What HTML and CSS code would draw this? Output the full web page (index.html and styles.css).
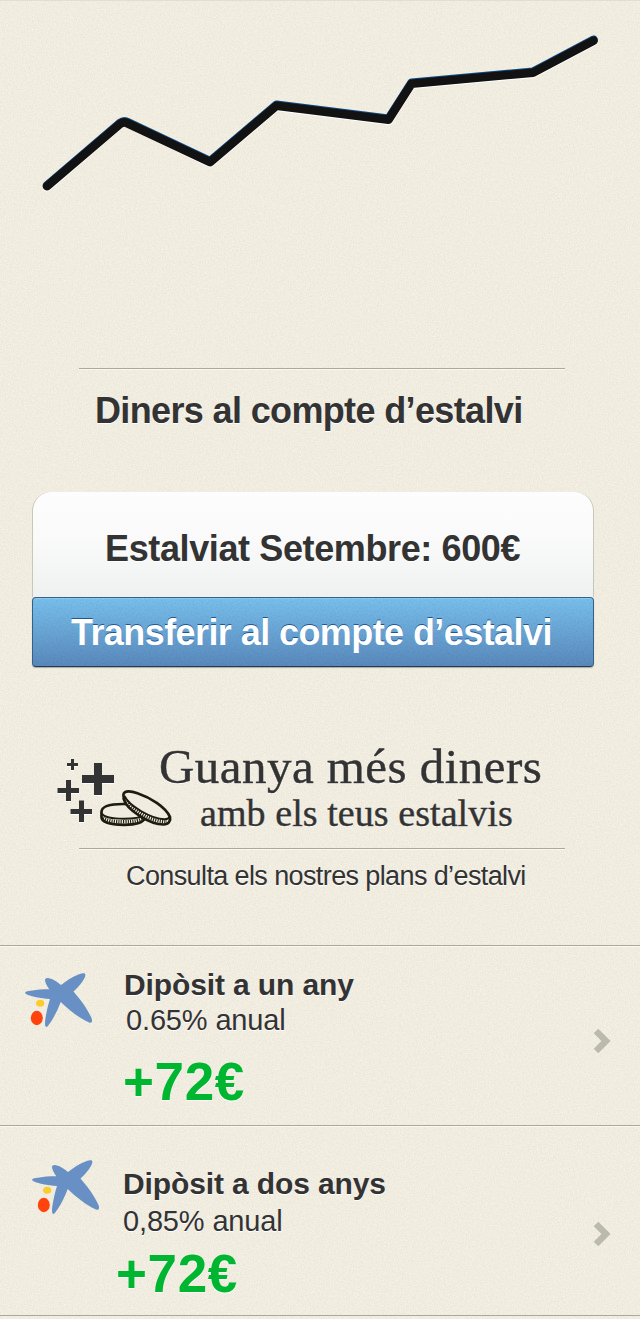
FILE: index.html
```html
<!DOCTYPE html>
<html lang="ca">
<head>
<meta charset="utf-8">
<title>Estalvis</title>
<link rel="stylesheet" href="styles.css">
</head>
<body>
<svg class="paper" width="640" height="1319" aria-hidden="true">
  <filter id="grain" x="0" y="0" width="100%" height="100%" color-interpolation-filters="sRGB">
    <feTurbulence type="fractalNoise" baseFrequency="0.75" numOctaves="3" seed="4"/>
    <feColorMatrix values="0.09 0 0 0 0.897  0.09 0 0 0 0.881  0.1 0 0 0 0.829  0 0 0 0 1"/>
  </filter>
  <rect width="640" height="1319" filter="url(#grain)"/>
</svg>
<main class="page">
  <section class="chart">
    <svg width="640" height="368" viewBox="0 0 640 368">
      <g fill="none" stroke-width="8.600" stroke-linecap="round" stroke-linejoin="round">
        <path stroke="#fff" d="M47 187.200 120 124.500Q124 121 128 123.500L210 163.200 276.500 106.700 388.500 120.700 411.500 84.700 533 73.700 593.500 41.700"/>
        <path stroke="#0d4a86" d="M47 185.400 120 123Q124 120 128 122.500L210 161.200 276.500 104.700 388.500 118.700 411.500 82.700 533 71.700 593.500 39.700"/>
        <path stroke="#121212" d="M47 186.200 120 124Q124 121 128 123.500L210 162.200 276.500 105.700 388.500 119.700 411.500 83.700 533 72.700 593.500 40.700"/>
      </g>
    </svg>
  </section>
  <hr class="rule">
  <h1 class="title">Diners al compte d’estalvi</h1>
  <section class="card">
    <div class="saved">Estalviat Setembre: 600€</div>
    <button class="transfer">
      <svg class="button-grain" width="560" height="68" aria-hidden="true">
        <filter id="dust" x="0" y="0" width="100%" height="100%" color-interpolation-filters="sRGB">
          <feTurbulence type="fractalNoise" baseFrequency="0.6" numOctaves="2"/>
          <feColorMatrix values="0 0 0 0 0.1  0 0 0 0 0.2  0 0 0 0 0.3  0.2 0 0 0 -0.08"/>
        </filter>
        <rect width="560" height="68" filter="url(#dust)"/>
      </svg>
      <span class="transfer-label">Transferir al compte d’estalvi</span>
    </button>
  </section>
  <section class="promo">
    <svg class="coins" width="120" height="76" viewBox="55 756 120 76">
      <g fill="#fff" transform="translate(0 1)"><path id="pluses" d="M71 759h3v4h4v3h-4v4h-3v-4h-4v-3h4zM94 763h8v12h12v8h-12v12h-8v-12H82v-8h12zM66 780h5v8h8v5h-8v8h-5v-8h-8.500v-5h8.500zM79 800.500h5v8.500h8v5h-8v8h-5v-8h-8.500v-5h8.500z"/></g>
      <use href="#pluses" fill="#333"/>
      <g fill="#f0ece0" stroke="#1d1c10" stroke-width="2.700" stroke-linejoin="round">
        <path d="M101.500 812C101.500 806.500 110 804 123 804S145 807 145 813V818C143 823 134 824.800 124 824.800 110 824.800 101.500 822 101.500 817Z"/>
        <path fill="none" stroke-width="1.900" d="M101.800 813.500C104 817.500 113 818.700 124 818.700 133 818.700 140 818 144 815"/>
        <path fill="none" stroke-width="3.600" stroke-dasharray="1.100 1.200" d="M103 818C107 821 114 821.800 124 821.800 134 821.800 140 820.500 144 817.500"/>
        <path d="M123.700 797C122 791 128 789.800 137.500 793.300 150 797.500 165.500 807 170 817 171 821 168.500 824.500 163.500 824.500 150 824.500 126.500 810 123.700 799Z"/>
        <path fill="none" stroke-width="1.900" d="M124.500 796C129 806 151.500 818.800 164.500 819.300 168 819.300 169.500 818 169.800 816"/>
        <path fill="none" stroke-width="3.600" stroke-dasharray="1.100 1.200" d="M125.500 799.500C131 810.500 152 821.500 167 821.800"/>
      </g>
    </svg>
    <div class="promo-text">
      <h2 class="promo-title">Guanya més diners</h2>
      <p class="promo-sub">amb els teus estalvis</p>
    </div>
  </section>
  <hr class="rule">
  <p class="consult">Consulta els nostres plans d’estalvi</p>
  <section class="plans">
    <article class="plan">
      <svg class="logo" width="68" height="56" viewBox="25 973 68 56">
        <g id="star">
          <path fill="#6890c4" d="M61 985C67 980 77 974 83 973.200 86 972.800 86 975 84 979 81 984 77 988.500 73.500 991.500 80 999 87 1008 91.500 1018 92.700 1021.500 92 1023.500 89 1022.500 79 1018 69 1010 60.700 1002 57 1012 52 1021 47.500 1026.500 45 1028 44.800 1025 45.200 1020 46.500 1012 48 1005 50 999 40 998.500 31 996.500 26 994 24.500 992.500 25 991.500 29 991 36 989.700 43 989.300 49.300 989.300 46 985 44.500 981 45.200 979 48 976 56 981 61 985Z"/>
          <ellipse cx="40.200" cy="1003.300" rx="4.100" ry="3.500" fill="#facc2e"/>
          <ellipse cx="36.800" cy="1018" rx="6" ry="7.200" fill="#ff430d"/>
        </g>
      </svg>
      <div class="plan-text">
        <h3 class="plan-name">Dipòsit a un any</h3>
        <p class="plan-rate">0.65% anual</p>
        <p class="plan-gain">+72€</p>
      </div>
      <svg class="arrow" width="18" height="28" viewBox="0 0 18 28"><path d="M3 3 13 13 3 23" fill="none" stroke="#bbbbab" stroke-width="6.500"/></svg>
    </article>
    <article class="plan plan-second">
      <svg class="logo" width="68" height="56" viewBox="25 973 68 56"><use href="#star"/></svg>
      <div class="plan-text">
        <h3 class="plan-name">Dipòsit a dos anys</h3>
        <p class="plan-rate">0,85% anual</p>
        <p class="plan-gain">+72€</p>
      </div>
      <svg class="arrow" width="18" height="28" viewBox="0 0 18 28"><path d="M3 3 13 13 3 23" fill="none" stroke="#bbbbab" stroke-width="6.500"/></svg>
    </article>
  </section>
</main>
</body>
</html>
```
FILE: styles.css
```css
* { box-sizing: border-box; }
body {
  margin: 0;
  background: #f0ece0;
  color: #333;
  font-family: "Liberation Sans", Arial, sans-serif;
  text-shadow: 0 1px 0 #fff;
}
h1, h2, h3, p { margin: 0; white-space: nowrap; }
svg { display: block; }
.paper { position: absolute; top: 0; left: 0; z-index: -1; }
.page { width: 640px; height: 1319px; overflow: hidden; }
.chart { height: 368px; border-top: 1px solid #e2ded2; }
.chart svg { margin-top: -1px; }
.rule {
  width: 486px;
  height: 2px;
  margin: 0 0 0 79px;
  border: 0;
  border-top: 1px solid #aaaa9c;
  border-bottom: 1px solid #faf8f0;
}
.title {
  padding: 21px 0 0 95px;
  font-size: 36px;
  line-height: 40px;
  letter-spacing: -0.64px;
}
.card { width: 562px; margin: 61px 0 0 32px; }
.saved {
  height: 105px;
  padding: 37px 0 0 72px;
  border: 1px solid #c9c6bb;
  border-top: 0;
  border-bottom: 0;
  border-radius: 19px 19px 0 0;
  background: linear-gradient(#fdfdfd 0%, #fafafa 45%, #eff1f1 100%);
  font-size: 36px;
  font-weight: bold;
  line-height: 40px;
  letter-spacing: -0.38px;
  white-space: nowrap;
}
.transfer {
  position: relative;
  display: block;
  width: 562px;
  height: 70px;
  padding: 1px 0 0 38px;
  border: 1px solid #356089;
  border-bottom-color: #203c5a;
  border-radius: 4px;
  background: linear-gradient(#78c0ed, #5989bc);
  box-shadow: inset 0 1px 0 #8fcaef, 0 1px 1px #aaa89f;
  color: #fff;
  font: bold 36px/68px "Liberation Sans", Arial, sans-serif;
  letter-spacing: -0.58px;
  text-align: left;
  text-shadow: 0 -1px 0 #1d5794;
  white-space: nowrap;
}
.button-grain { position: absolute; inset: 0; }
.transfer-label { position: relative; }
.promo { display: flex; height: 181px; padding: 75px 0 0 55px; }
.coins { margin-top: 14px; }
.promo-text {
  margin-left: -16px;
  font-family: "Liberation Serif", "Times New Roman", serif;
  -webkit-text-stroke: 0.4px #333;
}
.promo-title { font-size: 49px; font-weight: normal; line-height: 50px; letter-spacing: 0.45px; }
.promo-sub { padding: 1px 0 0 41px; font-size: 38px; line-height: 40px; letter-spacing: 0.07px; }
.consult {
  height: 95px;
  padding: 10px 0 0 126px;
  font-size: 27px;
  line-height: 32px;
  letter-spacing: -0.61px;
}
.plans { border-bottom: 1px solid #aaaa9c; }
.plan {
  display: flex;
  height: 180px;
  padding: 21px 0 0 25px;
  border-top: 1px solid #aaaa9c;
  box-shadow: inset 0 1px 0 #faf8f0;
}
.logo { margin-top: 6px; }
.plan-text { width: 470px; margin-left: 30px; }
.plan-name { padding-left: 1px; font-size: 30px; line-height: 36px; letter-spacing: -0.12px; }
.plan-rate { padding-left: 3px; font-size: 29px; line-height: 34px; letter-spacing: -0.15px; }
.plan-gain {
  margin-top: 17px;
  color: #00b52f;
  font-size: 53px;
  font-weight: bold;
  line-height: 56px;
  letter-spacing: 0.600px;
}
.arrow { margin-top: 61px; }
.plan-second { height: 190px; padding: 40px 0 0 32px; }
.plan-second .logo { margin-top: -6px; }
.plan-second .plan-text { margin-left: 22px; width: 471px; }
.plan-second .plan-rate { padding: 2px 0 0 1px; }
.plan-second .plan-gain { margin: 8px 0 0 -6px; }
.plan-second .arrow { margin-top: 55px; }
```
